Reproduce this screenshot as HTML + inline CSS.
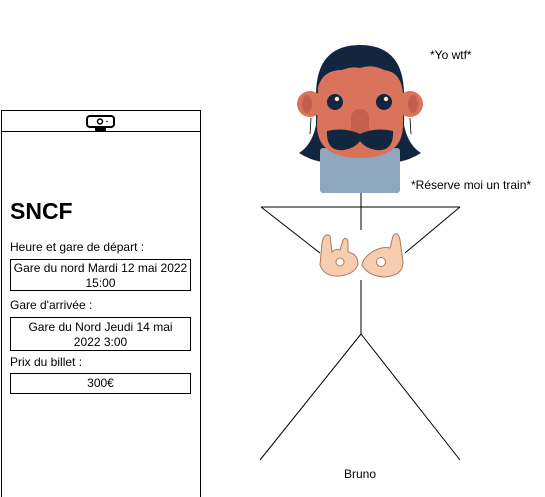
<!DOCTYPE html>
<html><head><meta charset="utf-8"><style>
body{margin:0;width:545px;height:497px;background:#fff;position:relative;overflow:hidden;font-family:"Liberation Sans",Arial,sans-serif;color:#000}
.t{position:absolute;font-size:12px;white-space:nowrap}
.box{position:absolute;border:1px solid #000;box-sizing:border-box;font-size:12px;text-align:center;line-height:15px}
</style></head><body>
<svg width="545" height="497" style="position:absolute;left:0;top:0">
<rect x="1.5" y="110.5" width="199" height="400" fill="none" stroke="#000"/>
<line x1="1" y1="131.5" x2="200" y2="131.5" stroke="#000"/>
<rect x="87" y="116" width="27" height="11" rx="3" fill="none" stroke="#000" stroke-width="2"/>
<circle cx="100" cy="121.5" r="2.5" fill="none" stroke="#000" stroke-width="1.5"/>
<circle cx="107" cy="121.5" r="0.8" fill="#000"/>
<rect x="95" y="128" width="11" height="3" fill="#000"/>
<!-- avatar -->
<path d="M316 95 Q316 45 360 45 Q404 45 404 95 L404 125 Q408 145 421 153 Q410 160 398 162 L322 162 Q310 160 299 153 Q312 145 316 125 Z" fill="#12263f"/>
<line x1="311" y1="118" x2="310" y2="134" stroke="#000" stroke-width="0.8"/>
<line x1="410" y1="118" x2="411" y2="134" stroke="#000" stroke-width="0.8"/>
<rect x="320" y="148" width="80" height="45" rx="3" fill="#8fa6bf"/>
<ellipse cx="310" cy="104" rx="13" ry="13" fill="#d9735c"/>
<ellipse cx="410" cy="104" rx="13" ry="13" fill="#d9735c"/>
<ellipse cx="307" cy="104" rx="5" ry="9" fill="#c45f4e"/>
<ellipse cx="413" cy="104" rx="5" ry="9" fill="#c45f4e"/>
<path d="M318 88 Q322 70 342 70 Q352 66 360 68 Q372 64 384 70 Q402 72 403 95 L403 125 Q403 158 360 158 Q317 158 317 125 Z" fill="#d9735c"/>
<circle cx="335" cy="102" r="8" fill="#12263f"/><circle cx="337" cy="99" r="2.2" fill="#f5e9d0"/>
<circle cx="384" cy="102" r="8" fill="#12263f"/><circle cx="386" cy="99" r="2.2" fill="#f5e9d0"/>
<rect x="351" y="109" width="18" height="28" rx="9" fill="#c45f4e"/>
<path d="M327 131 Q345 127 360 134 Q375 127 393 131 Q394 152 376 150 Q365 148 360 141 Q355 148 344 150 Q326 152 327 131 Z" fill="#12263f"/>
<!-- stick figure -->
<g stroke="#000" stroke-width="1" fill="none">
<line x1="361" y1="193" x2="361" y2="230"/>
<line x1="261" y1="207" x2="460" y2="207"/>
<line x1="261" y1="207" x2="320" y2="253"/>
<line x1="460" y1="207" x2="405" y2="253"/>
<line x1="361" y1="280" x2="361" y2="334"/>
<line x1="361" y1="334" x2="260" y2="460"/>
<line x1="361" y1="334" x2="460" y2="460"/>
</g>
<!-- hands -->
<g fill="#f7cdb0" stroke="#b07a5c" stroke-width="1">
<path d="M322 243 Q324 232 330 236 L332 252 Q336 248 340 250 L343 240 Q347 236 348 242 L348 252 Q358 254 358 264 Q355 274 340 276 Q324 277 320 265 Z"/>
<circle cx="340" cy="262" r="4" fill="#fff"/>
<path d="M400 240 Q398 230 393 236 L390 248 Q382 246 372 252 Q363 258 362 265 Q368 276 384 277 Q403 276 403 262 Z"/>
<circle cx="381" cy="262" r="4.5" fill="#fff"/>
</g>
</svg>
<div class="t" style="left:430px;top:48px">*Yo wtf*</div>
<div class="t" style="left:411px;top:178px">*Réserve moi un train*</div>
<div class="t" style="left:344px;top:467px">Bruno</div>
<div class="t" style="left:10px;top:198px;font-size:23px;font-weight:bold">SNCF</div>
<div class="t" style="left:10px;top:240px">Heure et gare de départ :</div>
<div class="box" style="left:10px;top:259px;width:181px;height:32px;padding-top:1px">Gare du nord Mardi 12 mai 2022<br>15:00</div>
<div class="t" style="left:10px;top:298px">Gare d'arrivée :</div>
<div class="box" style="left:10px;top:317px;width:181px;height:34px;padding-top:2px">Gare du Nord Jeudi 14 mai<br>2022 3:00</div>
<div class="t" style="left:10px;top:355px">Prix du billet :</div>
<div class="box" style="left:10px;top:373px;width:181px;height:21px;padding-top:2px">300€</div>
</body></html>
